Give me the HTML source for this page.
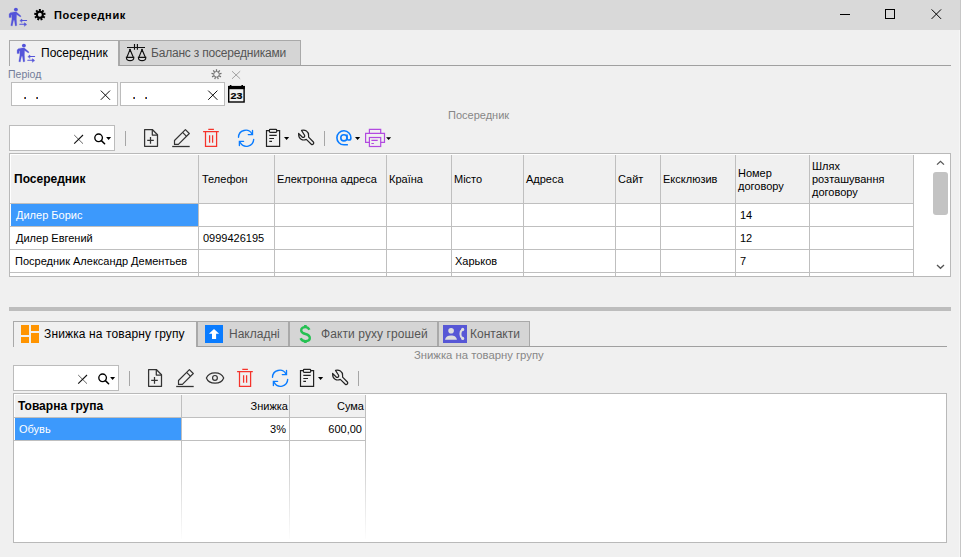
<!DOCTYPE html>
<html><head><meta charset="utf-8">
<style>
*{box-sizing:border-box;margin:0;padding:0}
html,body{width:961px;height:557px;overflow:hidden;background:#f0f0f0;font-family:"Liberation Sans",sans-serif;color:#000}
.a{position:absolute}
.t{position:absolute;white-space:nowrap;line-height:1}
svg{position:absolute;overflow:visible}
.inp{position:absolute;background:#fff;border:1px solid #bcbcbc}
.vl{position:absolute;width:1px;background:#bfbfbf}
.hl{position:absolute;height:1px;background:#bfbfbf}
.tab{position:absolute;border:1px solid #a9a9a9;border-bottom:none;background:#d5d5d5}
.c11{font-size:11px}
.sep{position:absolute;width:1px;height:15px;background:#a6a6a6}
</style></head>
<body>
<!-- title bar -->
<div class="a" style="left:0;top:0;width:961px;height:30px;background:#d9d9d9"></div>
<div class="a" style="left:960px;top:0;width:1px;height:557px;background:#c6c6c6"></div>
<div class="a" style="left:959px;top:30px;width:1px;height:527px;background:#f6f6f6"></div>

<div id="title-text" class="t" style="left:54px;top:10px;font-size:11px;letter-spacing:0.65px;font-weight:bold">Посередник</div>

<!-- window controls -->
<div class="a" style="left:840px;top:14px;width:10px;height:1px;background:#000"></div>
<div class="a" style="left:885px;top:9px;width:10px;height:10px;border:1px solid #000"></div>
<svg style="left:931px;top:9px" width="11" height="11" viewBox="931 9 11 11"><path d="M931.6 9.4 L941.1 18.9 M941.1 9.4 L931.6 18.9" stroke="#000" stroke-width="1"/></svg>

<!-- upper tabs -->
<div class="a" style="left:118px;top:65px;width:833px;height:1px;background:#a0a0a0"></div>
<div class="tab" style="left:119px;top:40px;width:182px;height:25px"></div>
<div class="tab" style="left:9px;top:40px;width:110px;height:26px;background:#f0f0f0"></div>
<div class="t" style="left:41px;top:47px;font-size:12px">Посередник</div>
<div class="t" style="left:151px;top:47px;font-size:12px;letter-spacing:-0.2px;color:#555">Баланс з посередниками</div>

<!-- period -->
<div class="t" style="left:8px;top:69px;font-size:10.5px;color:#737d9a">Період</div>
<div class="inp" style="left:11px;top:82px;width:107px;height:24px"></div>
<div class="inp" style="left:120px;top:82px;width:105px;height:24px"></div>
<div class="a" style="left:24px;top:97px;width:2px;height:2px;background:linear-gradient(90deg,#b86a10 50%,#0a3a9a 50%)"></div>
<div class="a" style="left:36px;top:97px;width:2px;height:2px;background:linear-gradient(90deg,#b86a10 50%,#0a3a9a 50%)"></div>
<div class="a" style="left:133px;top:97px;width:2px;height:2px;background:linear-gradient(90deg,#b86a10 50%,#0a3a9a 50%)"></div>
<div class="a" style="left:145px;top:97px;width:2px;height:2px;background:linear-gradient(90deg,#b86a10 50%,#0a3a9a 50%)"></div>

<div class="t" style="left:448px;top:110px;font-size:11px;color:#878787">Посередник</div>

<!-- toolbar 1 -->
<div class="inp" style="left:9px;top:125px;width:106px;height:26px"></div>
<div class="sep" style="left:125px;top:131px"></div>
<div class="sep" style="left:324px;top:131px"></div>

<!-- icons upper -->
<svg style="left:6px;top:5px" width="24" height="24" viewBox="6 5 24 24"><g transform="translate(0 0)" fill="#5353d9" stroke="#5353d9" stroke-linecap="round" stroke-linejoin="round"><circle cx="15.9" cy="9.6" r="1.95" stroke="none"/><polygon points="14.2,11.9 16.4,12.1 20.5,15.4 21.0,16.3 20.4,17.0 16.6,14.6 16.4,18.9 16.8,25.6 15.3,26.0 14.5,21.0 14.0,19.8 13.4,21.0 12.3,26.0 10.8,25.6 11.9,18.9 11.9,15.0 11.3,14.8 11.2,17.6 9.1,17.6 9.1,13.9 10.3,12.7" stroke-width="0.25"/><path d="M21.2 20.5 H26.6 M19.8 24.3 H25.2" stroke-width="1.1" fill="none"/><path d="M20.1 20.5 L21.9 19 L21.9 22.1 Z M26.5 24.3 L24.4 22.7 L24.4 25.9 Z" stroke-width="0.5"/></g></svg>
<svg style="left:30px;top:6px" width="20" height="18" viewBox="30 6 20 18"><circle cx="39.85" cy="14.7" r="3" fill="none" stroke="#000" stroke-width="2.1"/><g stroke="#000" stroke-width="2" stroke-linecap="butt"><line x1="39.85" y1="11.10" x2="39.85" y2="9.00"/><line x1="42.16" y1="11.94" x2="43.51" y2="10.33"/><line x1="43.40" y1="14.07" x2="45.46" y2="13.71"/><line x1="42.97" y1="16.50" x2="44.79" y2="17.55"/><line x1="41.08" y1="18.08" x2="41.80" y2="20.06"/><line x1="38.62" y1="18.08" x2="37.90" y2="20.06"/><line x1="36.73" y1="16.50" x2="34.91" y2="17.55"/><line x1="36.30" y1="14.07" x2="34.24" y2="13.71"/><line x1="37.54" y1="11.94" x2="36.19" y2="10.33"/></g></svg>
<svg style="left:14px;top:40px" width="24" height="24" viewBox="14 40 24 24"><g transform="translate(8 36)" fill="#5353d9" stroke="#5353d9" stroke-linecap="round" stroke-linejoin="round"><circle cx="15.9" cy="9.6" r="1.95" stroke="none"/><polygon points="14.2,11.9 16.4,12.1 20.5,15.4 21.0,16.3 20.4,17.0 16.6,14.6 16.4,18.9 16.8,25.6 15.3,26.0 14.5,21.0 14.0,19.8 13.4,21.0 12.3,26.0 10.8,25.6 11.9,18.9 11.9,15.0 11.3,14.8 11.2,17.6 9.1,17.6 9.1,13.9 10.3,12.7" stroke-width="0.25"/><path d="M21.2 20.5 H26.6 M19.8 24.3 H25.2" stroke-width="1.1" fill="none"/><path d="M20.1 20.5 L21.9 19 L21.9 22.1 Z M26.5 24.3 L24.4 22.7 L24.4 25.9 Z" stroke-width="0.5"/></g></svg>
<svg style="left:122px;top:40px" width="28" height="26" viewBox="122 40 28 26"><g stroke="#111" stroke-width="1.15" fill="none"><path d="M127 47.5 H145 M134.5 44 V49.8 M137.4 44 V49.8"/><path d="M130 49.6 L126.9 57.3 M130 49.6 L133.3 57.3 M142 49.6 L138.9 57.3 M142 49.6 L145.3 57.3"/><path d="M126.4 57.4 H133.8 A3.7 3.2 0 0 1 126.4 57.4 Z M138.4 57.4 H145.8 A3.7 3.2 0 0 1 138.4 57.4 Z"/></g><circle cx="130" cy="49.6" r="0.9" fill="#111"/><circle cx="142" cy="49.6" r="0.9" fill="#111"/></svg>
<svg style="left:210px;top:68px" width="14" height="14" viewBox="210 68 14 14"><circle cx="216.5" cy="74.3" r="2.8" fill="none" stroke="#707070" stroke-width="1"/><g stroke="#707070" stroke-width="1.25"><line x1="216.50" y1="71.30" x2="216.50" y2="69.20"/><line x1="218.43" y1="72.00" x2="219.78" y2="70.39"/><line x1="219.45" y1="73.78" x2="221.52" y2="73.41"/><line x1="219.10" y1="75.80" x2="220.92" y2="76.85"/><line x1="217.53" y1="77.12" x2="218.24" y2="79.09"/><line x1="215.47" y1="77.12" x2="214.76" y2="79.09"/><line x1="213.90" y1="75.80" x2="212.08" y2="76.85"/><line x1="213.55" y1="73.78" x2="211.48" y2="73.41"/><line x1="214.57" y1="72.00" x2="213.22" y2="70.39"/></g></svg>
<svg style="left:230px;top:70px" width="12" height="10" viewBox="230 70 12 10"><path d="M232 71.2 L240.2 78.8 M240.2 71.2 L232 78.8" stroke="#9a9a9a" stroke-width="0.9"/></svg>
<svg style="left:98px;top:88px" width="15" height="14" viewBox="98 88 15 14"><path d="M100.8 90.6 L110.0 99.8 M110.0 90.6 L100.8 99.8" stroke="#000" stroke-width="0.95"/></svg>
<svg style="left:205px;top:88px" width="15" height="14" viewBox="205 88 15 14"><path d="M208.2 90.6 L217.39999999999998 99.8 M217.39999999999998 90.6 L208.2 99.8" stroke="#000" stroke-width="0.95"/></svg>
<svg style="left:226px;top:83px" width="21" height="22" viewBox="226 83 21 22"><rect x="228.7" y="86.6" width="15.4" height="15.4" fill="#f2f2f2" stroke="#000" stroke-width="1.4"/><rect x="228" y="86" width="16.8" height="3.2" fill="#000"/><rect x="229.8" y="85" width="1.6" height="2" fill="#000"/><rect x="241.4" y="85" width="1.6" height="2" fill="#000"/><g transform="translate(236.5 0) scale(1.18 1) translate(-236.5 0)"><text x="236.5" y="99" font-family="Liberation Sans" font-weight="bold" font-size="9" text-anchor="middle" fill="#000" stroke="#000" stroke-width="0.2">23</text></g></svg>
<svg style="left:70px;top:132px" width="16" height="14" viewBox="70 132 16 14"><path d="M74.2 135 L83 143.7" stroke="#555" stroke-width="0.9"/><path d="M83 135 L74.2 143.7" stroke="#111" stroke-width="1.1"/></svg>
<svg style="left:92px;top:130px" width="22" height="18" viewBox="92 130 22 18"><g transform="translate(0 0)"><circle cx="98.6" cy="137.8" r="3.8" fill="none" stroke="#000" stroke-width="1.35"/><path d="M101.4 140.6 L104.6 143.8" stroke="#000" stroke-width="1.5" stroke-linecap="round"/><path d="M106.1 137 H111.1 L108.6 140 Z" fill="#000"/></g></svg>
<svg style="left:140px;top:126px" width="22" height="24" viewBox="140 126 22 24"><g transform="translate(0 0)" fill="none" stroke="#333" stroke-width="1.25" stroke-linejoin="round"><path d="M144.6 129.5 H152.3 L157.5 134.7 V146.3 H144.6 Z"/><path d="M152.3 129.5 V135 H157.5"/><path d="M147.2 140.4 H153.8 M150.5 137 V143.8"/></g></svg>
<svg style="left:169px;top:126px" width="24" height="24" viewBox="169 126 24 24"><g transform="translate(0 0)" fill="none" stroke="#333" stroke-width="1.2" stroke-linejoin="round"><path d="M174.5 140.5 L185.4 129.6 L189.3 133.5 L178.4 144.4 H174.5 Z"/><path d="M182.6 132.4 L186.5 136.3"/><path d="M172.2 146.5 H189.7" stroke-width="1.3"/></g></svg>
<svg style="left:199px;top:126px" width="24" height="24" viewBox="199 126 24 24"><g transform="translate(0 0)" fill="none" stroke="#f5332b" stroke-width="1.25"><path d="M208.3 129.4 H213.9 M203.1 131.6 H218.8"/><path d="M205.5 131.6 V146.3 H216.6 V131.6"/><path d="M209.6 135.2 V142.7 M212.6 135.2 V142.7"/></g></svg>
<svg style="left:234px;top:126px" width="24" height="24" viewBox="234 126 24 24"><g transform="translate(0 0)" fill="none" stroke="#0a7cff" stroke-width="1.35" stroke-linecap="round"><path d="M238.5 137.3 A7.2 7.2 0 0 1 251.9 133.8"/><path d="M252.5 130.4 V134.6 H248.3"/><path d="M253.7 139.4 A7.2 7.2 0 0 1 240.3 142.7"/><path d="M243.6 141.3 H239.4 V145.5"/></g></svg>
<svg style="left:262px;top:126px" width="30" height="24" viewBox="262 126 30 24"><g transform="translate(0 0)" fill="none" stroke="#222" stroke-width="1.2"><path d="M269.3 130.6 H266.5 V146.4 H279.6 V130.6 H276.7"/><rect x="269.4" y="129.4" width="7.3" height="3" rx="0.8"/><path d="M269.3 135.4 H276.7 M269.3 138.5 H274 M269.3 141.4 H272"/></g><path d="M284 137.1 H289.2 L286.6 140.1 Z" fill="#000"/></svg>
<svg style="left:294px;top:126px" width="24" height="24" viewBox="294 126 24 24"><g transform="translate(0 0)" fill="none" stroke="#222" stroke-width="1.2" stroke-linejoin="round"><path d="M301.5 130.4 C305 129.6 308.8 131.2 308.6 135.6 L308.6 137.2 L313.4 142 C314.6 143.3 312.6 145.4 311.3 144.2 L306.3 139.4 C302.8 140.9 298.5 139.5 298.6 133.4 L302.2 137 C303.6 138.3 305.6 136.3 304.4 135 Z"/></g></svg>
<svg style="left:332px;top:126px" width="30" height="24" viewBox="332 126 30 24"><g fill="none" stroke="#0a7cff" stroke-width="1.6"><circle cx="343.9" cy="137.8" r="3.1"/><path d="M347 134.6 V138.3 C347 140.6 350.9 140.8 350.9 138 A7 7 0 1 0 343.9 144.8 H347.9"/></g><path d="M355 137 H360.2 L357.6 140 Z" fill="#000"/></svg>
<svg style="left:362px;top:126px" width="32" height="24" viewBox="362 126 32 24"><g fill="none" stroke="#b24ae0" stroke-width="1.2"><path d="M369.4 133.3 V129.4 H380.7 V133.3"/><path d="M369.4 142.3 H365.6 V133.3 H384.5 V142.3 H380.7"/><rect x="369.4" y="137.5" width="11.3" height="9"/><path d="M371.4 140.4 H377.7 M371.4 143.5 H373.9"/></g><path d="M386.1 137.2 H391.1 L388.6 140 Z" fill="#000"/></svg>
<!-- grid 1 -->
<div class="a" style="left:9px;top:153px;width:942px;height:124px;border:1px solid #b9b9b9;background:#fff"></div>
<div class="a" style="left:11px;top:155px;width:903px;height:48px;background:#f0f0f0"></div>

<!-- grid1 lines -->
<div class="vl" style="left:198px;top:155px;height:121px"></div>
<div class="vl" style="left:274px;top:155px;height:121px"></div>
<div class="vl" style="left:386px;top:155px;height:121px"></div>
<div class="vl" style="left:451px;top:155px;height:121px"></div>
<div class="vl" style="left:523px;top:155px;height:121px"></div>
<div class="vl" style="left:615px;top:155px;height:121px"></div>
<div class="vl" style="left:660px;top:155px;height:121px"></div>
<div class="vl" style="left:735px;top:155px;height:121px"></div>
<div class="vl" style="left:809px;top:155px;height:121px"></div>
<div class="vl" style="left:913px;top:155px;height:121px"></div>
<div class="hl" style="left:10px;top:203px;width:904px"></div>
<div class="hl" style="left:10px;top:226px;width:904px"></div>
<div class="hl" style="left:10px;top:249px;width:904px"></div>
<div class="hl" style="left:10px;top:272px;width:904px"></div>
<div class="a" style="left:11px;top:204px;width:187px;height:22px;background:#3c99fc"></div>
<div class="t" style="left:14px;top:173px;font-size:12px;font-weight:bold">Посередник</div>
<div class="t c11" style="left:202px;top:174px">Телефон</div>
<div class="t c11" style="left:277px;top:174px">Електронна адреса</div>
<div class="t c11" style="left:389px;top:174px">Країна</div>
<div class="t c11" style="left:454px;top:174px">Місто</div>
<div class="t c11" style="left:526px;top:174px">Адреса</div>
<div class="t c11" style="left:618px;top:174px">Сайт</div>
<div class="t c11" style="left:663px;top:174px">Ексклюзив</div>
<div class="t c11" style="left:738px;top:168px">Номер</div>
<div class="t c11" style="left:738px;top:181px">договору</div>
<div class="t c11" style="left:812px;top:161px">Шлях</div>
<div class="t c11" style="left:812px;top:174px">розташування</div>
<div class="t c11" style="left:812px;top:187px">договору</div>
<div class="t c11" style="left:16px;top:210px;color:#fff">Дилер Борис</div>
<div class="t c11" style="left:740px;top:210px">14</div>
<div class="t c11" style="left:16px;top:233px">Дилер Евгений</div>
<div class="t c11" style="left:203px;top:233px">0999426195</div>
<div class="t c11" style="left:740px;top:233px">12</div>
<div class="t c11" style="left:15px;top:256px">Посредник Александр Дементьев</div>
<div class="t c11" style="left:455px;top:256px">Харьков</div>
<div class="t c11" style="left:740px;top:256px">7</div>
<!-- splitter -->
<div class="a" style="left:9px;top:307px;width:942px;height:4px;background:#bdbdbd"></div>

<!-- lower tabs -->
<div class="a" style="left:196px;top:346px;width:751px;height:1px;background:#a0a0a0"></div>
<div class="tab" style="left:197px;top:321px;width:92px;height:25px"></div>
<div class="tab" style="left:289px;top:321px;width:149px;height:25px"></div>
<div class="tab" style="left:438px;top:321px;width:92px;height:25px"></div>
<div class="tab" style="left:13px;top:321px;width:184px;height:26px;background:#f0f0f0"></div>
<div class="t" style="left:44px;top:328px;font-size:12px;letter-spacing:0.13px">Знижка на товарну групу</div>
<div class="t" style="left:229px;top:328px;font-size:12px;color:#555">Накладні</div>
<div class="t" style="left:321px;top:328px;font-size:12px;letter-spacing:0.09px;color:#555">Факти руху грошей</div>
<div class="t" style="left:470px;top:328px;font-size:12px;color:#555">Контакти</div>

<div class="t" style="left:414px;top:350px;font-size:11.3px;color:#878787">Знижка на товарну групу</div>

<!-- toolbar 2 -->
<div class="inp" style="left:13px;top:365px;width:106px;height:26px"></div>
<div class="sep" style="left:129px;top:371px"></div>
<div class="sep" style="left:358px;top:371px"></div>

<!-- grid 2 -->
<div class="a" style="left:13px;top:393px;width:934px;height:150px;border:1px solid #b9b9b9;background:#fff"></div>

<!-- lower -->
<svg style="left:930px;top:156px" width="18" height="14" viewBox="930 156 18 14"><path d="M937 164.6 L940.5 161.3 L944 164.6" fill="none" stroke="#555" stroke-width="1.3"/></svg>
<div class="a" style="left:933px;top:172px;width:15px;height:43px;background:#c3c3c3;border-radius:3px"></div>
<svg style="left:930px;top:260px" width="18" height="14" viewBox="930 260 18 14"><path d="M937 265 L940.5 268.3 L944 265" fill="none" stroke="#555" stroke-width="1.3"/></svg>
<div class="a" style="left:21px;top:325px;width:8px;height:10px;background:#ff9400"></div>
<div class="a" style="left:21px;top:337px;width:8px;height:6px;background:#ff9400"></div>
<div class="a" style="left:31px;top:325px;width:8px;height:6px;background:#ff9400"></div>
<div class="a" style="left:31px;top:333px;width:8px;height:10px;background:#ff9400"></div>
<svg style="left:205px;top:325px" width="18" height="18" viewBox="205 325 18 18"><rect x="205" y="325" width="18" height="18" fill="#0a7cff"/><path d="M214 328.9 L219.1 333.7 H216.1 V339 H212 V333.7 H208.9 Z" fill="#fff"/></svg>
<svg style="left:298px;top:323px" width="15" height="22" viewBox="298 323 15 22"><path d="M309.4 329.8 C308.6 328 307.2 327.1 305.3 327.1 C302.7 327.1 301.2 328.5 301.2 330.5 C301.2 332.7 303.1 333.4 305.5 334 C308.3 334.7 309.8 335.7 309.8 338 C309.8 340.1 308 341.1 305.4 341.1 C303.1 341.1 301.4 340.2 300.6 338.2" fill="none" stroke="#25c152" stroke-width="2.4"/><path d="M305.4 324.9 V327.6 M305.4 340.5 V343.1" stroke="#25c152" stroke-width="2.6"/></svg>
<svg style="left:443px;top:325px" width="24" height="18" viewBox="443 325 24 18"><rect x="443" y="325" width="24" height="18" fill="#5757d6"/><circle cx="451.1" cy="330.8" r="2.8" fill="#dedede"/><path d="M445 339.8 C445.3 336.9 447.8 335.5 451 335.5 C454.2 335.5 456.7 336.9 456.9 339.8 Z" fill="#dedede"/><path d="M462.4 329.6 C460.9 330.6 460.4 332.2 460.4 333.9 C460.4 335.6 460.9 337.2 462.4 338.2" fill="none" stroke="#dedede" stroke-width="2"/><circle cx="462.7" cy="329.4" r="1.55" fill="#dedede"/><circle cx="462.7" cy="338.4" r="1.55" fill="#dedede"/></svg>
<svg style="left:74px;top:372px" width="16" height="14" viewBox="70 132 16 14"><path d="M74.2 135 L83 143.7" stroke="#555" stroke-width="0.9"/><path d="M83 135 L74.2 143.7" stroke="#111" stroke-width="1.1"/></svg>
<svg style="left:96px;top:370px" width="22" height="18" viewBox="92 130 22 18"><circle cx="98.6" cy="137.8" r="3.8" fill="none" stroke="#000" stroke-width="1.35"/><path d="M101.4 140.6 L104.6 143.8" stroke="#000" stroke-width="1.5" stroke-linecap="round"/><path d="M106.1 137 H111.1 L108.6 140 Z" fill="#000"/></svg>
<svg style="left:144px;top:366px" width="22" height="24" viewBox="140 126 22 24"><g fill="none" stroke="#333" stroke-width="1.25" stroke-linejoin="round"><path d="M144.6 129.5 H152.3 L157.5 134.7 V146.3 H144.6 Z"/><path d="M152.3 129.5 V135 H157.5"/><path d="M147.2 140.4 H153.8 M150.5 137 V143.8"/></g></svg>
<svg style="left:173px;top:366px" width="24" height="24" viewBox="169 126 24 24"><g fill="none" stroke="#333" stroke-width="1.2" stroke-linejoin="round"><path d="M174.5 140.5 L185.4 129.6 L189.3 133.5 L178.4 144.4 H174.5 Z"/><path d="M182.6 132.4 L186.5 136.3"/><path d="M172.2 146.5 H189.7" stroke-width="1.3"/></g></svg>
<svg style="left:202px;top:366px" width="26" height="24" viewBox="202 366 26 24"><g fill="none" stroke="#333" stroke-width="1.2"><path d="M206.4 378 C209 371.1 221.1 371.1 223.7 378 C221.1 384.9 209 384.9 206.4 378 Z"/><circle cx="214.95" cy="377.9" r="2.4"/></g></svg>
<svg style="left:233px;top:366px" width="24" height="24" viewBox="199 126 24 24"><g fill="none" stroke="#f5332b" stroke-width="1.25"><path d="M208.3 129.4 H213.9 M203.1 131.6 H218.8"/><path d="M205.5 131.6 V146.3 H216.6 V131.6"/><path d="M209.6 135.2 V142.7 M212.6 135.2 V142.7"/></g></svg>
<svg style="left:268px;top:366px" width="24" height="24" viewBox="234 126 24 24"><g fill="none" stroke="#0a7cff" stroke-width="1.35" stroke-linecap="round"><path d="M238.5 137.3 A7.2 7.2 0 0 1 251.9 133.8"/><path d="M252.5 130.4 V134.6 H248.3"/><path d="M253.7 139.4 A7.2 7.2 0 0 1 240.3 142.7"/><path d="M243.6 141.3 H239.4 V145.5"/></g></svg>
<svg style="left:296px;top:366px" width="30" height="24" viewBox="262 126 30 24"><g fill="none" stroke="#222" stroke-width="1.2"><path d="M269.3 130.6 H266.5 V146.4 H279.6 V130.6 H276.7"/><rect x="269.4" y="129.4" width="7.3" height="3" rx="0.8"/><path d="M269.3 135.4 H276.7 M269.3 138.5 H274 M269.3 141.4 H272"/></g><path d="M284 137.1 H289.2 L286.6 140.1 Z" fill="#000"/></svg>
<svg style="left:328px;top:366px" width="24" height="24" viewBox="294 126 24 24"><g fill="none" stroke="#222" stroke-width="1.2" stroke-linejoin="round"><path d="M301.5 130.4 C305 129.6 308.8 131.2 308.6 135.6 L308.6 137.2 L313.4 142 C314.6 143.3 312.6 145.4 311.3 144.2 L306.3 139.4 C302.8 140.9 298.5 139.5 298.6 133.4 L302.2 137 C303.6 138.3 305.6 136.3 304.4 135 Z"/></g></svg>
<div class="a" style="left:15px;top:395px;width:351px;height:22px;background:#f0f0f0"></div>
<div class="vl" style="left:181px;top:395px;height:46px"></div>
<div class="a" style="left:181px;top:441px;width:1px;height:98px;background:linear-gradient(#c0c0c0,#fdfdfd)"></div>
<div class="vl" style="left:289px;top:395px;height:46px"></div>
<div class="a" style="left:289px;top:441px;width:1px;height:98px;background:linear-gradient(#c0c0c0,#fdfdfd)"></div>
<div class="vl" style="left:365px;top:395px;height:46px"></div>
<div class="a" style="left:365px;top:441px;width:1px;height:98px;background:linear-gradient(#c0c0c0,#fdfdfd)"></div>
<div class="hl" style="left:14px;top:417px;width:352px"></div>
<div class="hl" style="left:14px;top:440px;width:352px"></div>
<div class="a" style="left:15px;top:418px;width:166px;height:22px;background:#3c99fc"></div>
<div class="t" style="left:18px;top:400px;font-size:12px;font-weight:bold">Товарна група</div>
<div class="t c11" style="right:673px;top:401px">Знижка</div>
<div class="t c11" style="right:597px;top:401px">Сума</div>
<div class="t c11" style="left:19px;top:424px;color:#fff">Обувь</div>
<div class="t c11" style="right:675px;top:424px">3%</div>
<div class="t c11" style="right:599px;top:424px">600,00</div>
</body></html>
